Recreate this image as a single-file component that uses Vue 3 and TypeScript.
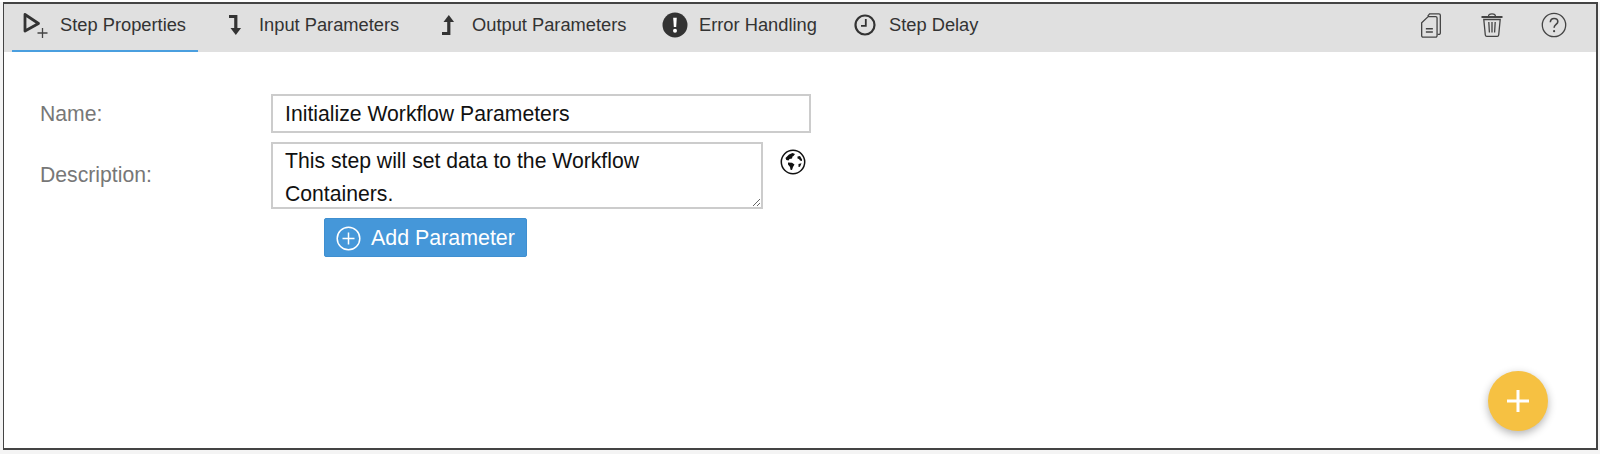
<template>
  <div class="page">
    <div class="panel">
      <div class="toolbar">
        <div class="tabs">
          <a v-for="tab in tabs" :key="tab.label" class="tab" :class="[tab.cls, { active: tab.active }]">
            <svg class="tab-icon" :width="tab.w" height="28" :viewBox="`0 0 ${tab.w} 28`" v-html="tab.icon"></svg>
            <span>{{ tab.label }}</span>
          </a>
        </div>
        <div class="tools">
          <svg width="24" height="28" viewBox="0 0 24 30" fill="none" stroke="#444" stroke-width="1.4">
            <path d="M8.500 5.500 10.500 3h10a1.500 1.500 0 0 1 1.500 1.500v19a1.500 1.500 0 0 1-1.500 1.500H19" />
            <path d="M9 6h8a1.500 1.500 0 0 1 1.500 1.500v19a1.500 1.500 0 0 1-1.500 1.500H3.500A1.500 1.500 0 0 1 2 26.500V12.500z" />
            <path d="M6.500 19h7.500M6.500 22.500h7.500" />
          </svg>
          <svg width="24" height="28" viewBox="0 0 24 28" fill="none" stroke="#444" stroke-width="1.3">
            <path d="M1.500 6h21" stroke-width="2" />
            <path d="M8.500 5.500c0-2 1-2.700 3.500-2.700s3.500.7 3.500 2.700" />
            <path d="M3.800 8.500l1.500 15.500a1.500 1.500 0 0 0 1.500 1.300h10.400a1.500 1.500 0 0 0 1.500-1.300l1.500-15.500z" />
            <path d="M8.800 11l.6 10.500M12 11v10.500M15.200 11l-.6 10.500" />
          </svg>
          <svg width="26" height="28" viewBox="0 0 26 28" fill="none" stroke="#444" stroke-width="1.3">
            <circle cx="13" cy="14" r="11.700" />
            <path d="M9.300 11.200c.2-2.400 1.700-3.700 3.800-3.700 2.200 0 3.700 1.300 3.700 3.200 0 2.700-3.700 2.800-3.700 6" stroke-width="1.600" />
            <circle cx="13.100" cy="20.200" r="1.100" fill="#444" stroke="none" />
          </svg>
        </div>
      </div>

      <form class="form" @submit.prevent>
        <div class="row row-name">
          <label class="label">Name:</label>
          <input class="name-input" type="text" value="Initialize Workflow Parameters" />
        </div>
        <div class="row row-desc">
          <label class="label">Description:</label>
          <textarea class="desc-input">This step will set data to the Workflow Containers.</textarea>
          <svg class="globe" width="26" height="26" viewBox="0 0 26 26">
            <circle cx="13" cy="13" r="11.700" fill="none" stroke="#111" stroke-width="1.500" />
            <path d="M5.500 9 9 5.500l3.500-1.500 2.500 1-1.500 2-1 .5-.5 2-2.500.5-1 1.500-2.200-.5z" fill="#111" />
            <path d="M8 13.500l4 .2 2.500 1.800-1.500 2.500-1 3-1.500-.2-.5-2.800-2-2.500z" fill="#111" />
            <path d="M17.500 7.500l2.500-.5 2 3.500v1.500l-2-.5-1-1.500-1.500-.5zM18.500 15l3-.8-1.500 3.500-1.500.2z" fill="#111" />
          </svg>
        </div>
        <button class="add-btn" type="button">
          <svg width="25" height="25" viewBox="0 0 25 25" fill="none" stroke="#fff" stroke-width="1.500">
            <circle cx="12.500" cy="12.500" r="11.300" />
            <path d="M12.500 6.500v12M6.500 12.500h12" />
          </svg>
          <span>Add Parameter</span>
        </button>
      </form>

      <button class="fab" type="button" aria-label="Add">
        <svg width="22" height="22" viewBox="0 0 22 22"><path d="M11 0v22M0 11h22" stroke="#fff" stroke-width="3" /></svg>
      </button>
    </div>
  </div>
</template>

<script setup lang="ts">
interface Tab {
  label: string;
  cls: string;
  w: number;
  icon: string;
  active?: boolean;
}

const tabs: Tab[] = [
  {
    label: 'Step Properties',
    cls: 'tab-step',
    w: 26,
    active: true,
    icon:
      '<path d="M2 3.500 15.500 12.500 2 20z" fill="none" stroke="#333" stroke-width="2.800" stroke-linejoin="round"/><path d="M19.500 17v10M14.500 22h10" stroke="#444" stroke-width="1.300"/>',
  },
  {
    label: 'Input Parameters',
    cls: 'tab-input',
    w: 16,
    icon: '<path d="M2 5.500h6.800V18" fill="none" stroke="#333" stroke-width="3.200"/><path d="M3.500 17h10.600l-5.300 7z" fill="#333"/>',
  },
  {
    label: 'Output Parameters',
    cls: 'tab-output',
    w: 16,
    icon: '<path d="M2 22.500h6.800V10" fill="none" stroke="#333" stroke-width="3.200"/><path d="M3.500 11h10.600L8.800 4z" fill="#333"/>',
  },
  {
    label: 'Error Handling',
    cls: 'tab-error',
    w: 26,
    icon: '<circle cx="13" cy="14" r="12.500" fill="#333"/><path d="M11.200 6.800h3.600l-.6 9.200h-2.400z" fill="#fff"/><circle cx="13" cy="19.700" r="2" fill="#fff"/>',
  },
  {
    label: 'Step Delay',
    cls: 'tab-delay',
    w: 22,
    icon: '<circle cx="11" cy="14" r="9.500" fill="none" stroke="#333" stroke-width="2.200"/><path d="M11.800 8v6.800H7" fill="none" stroke="#333" stroke-width="1.800"/>',
  },
];
</script>

<style>
html,
body {
  margin: 0;
  background: #f4f4f4;
}
</style>

<style scoped>
.page {
  box-sizing: border-box;
  width: 1600px;
  height: 454px;
  padding: 2px 2px 4px 3px;
  background: linear-gradient(#fff 0 2px, #f4f4f4 2px);
  font-family: 'Liberation Sans', Arial, sans-serif;
}

.panel {
  position: relative;
  box-sizing: border-box;
  height: 100%;
  border: 2px solid #444;
  border-left-width: 1px;
  background: #fff;
}

.toolbar {
  display: flex;
  justify-content: space-between;
  height: 48px;
  background: #e0e0e0;
}

.tabs {
  display: flex;
  padding-left: 8px;
}

.tab {
  box-sizing: border-box;
  display: flex;
  align-items: center;
  height: 48px;
  padding-bottom: 6px;
  font-size: 18.3px;
  color: #333;
  white-space: nowrap;
}

.tab.active {
  border-bottom: 2px solid #4a9fdf;
  padding-bottom: 4px;
}

.tab-step {
  width: 186px;
  padding-left: 11px;
}

.tab-step .tab-icon {
  margin-right: 11px;
}

.tab-input {
  margin-left: 29px;
  width: 213px;
}

.tab-input .tab-icon {
  margin-right: 16px;
}

.tab-output {
  width: 222px;
}

.tab-output .tab-icon {
  margin-right: 16px;
}

.tab-error {
  width: 192px;
}

.tab-error .tab-icon {
  margin-right: 11px;
}

.tab-delay .tab-icon {
  margin-right: 13px;
}

.tools {
  display: flex;
  align-items: center;
  gap: 37px;
  padding: 0 29px 6px 0;
}

.form {
  display: flex;
  flex-direction: column;
  padding: 42px 0 0 36px;
}

.row {
  display: flex;
}

.row-name {
  align-items: center;
}

.row-desc {
  margin-top: 9px;
  align-items: flex-start;
}

.label {
  width: 231px;
  font-size: 21.2px;
  color: #777;
}

.row-desc .label {
  margin-top: 21px;
}

.name-input,
.desc-input {
  box-sizing: border-box;
  margin: 0;
  border: 2px solid #ccc;
  border-radius: 0;
  outline: none;
  padding: 0 12px;
  font-family: inherit;
  font-size: 21.2px;
  color: #111;
  background: #fff;
}

.name-input {
  width: 540px;
  height: 39px;
}

.desc-input {
  display: block;
  width: 492px;
  height: 67px;
  padding: 0 30px 0 12px;
  line-height: 33px;
  overflow: hidden;
}

.globe {
  margin: 7px 0 0 17px;
}

.add-btn {
  box-sizing: border-box;
  display: flex;
  align-items: center;
  gap: 10px;
  width: 203px;
  height: 39px;
  margin: 9px 0 0 284px;
  padding: 1px 0 0 11px;
  border: 1px solid #3f8fd0;
  border-radius: 2px;
  background: #4597d9;
  font-family: inherit;
  font-size: 21.4px;
  color: #fff;
}

.fab {
  position: absolute;
  right: 48px;
  bottom: 17px;
  display: flex;
  align-items: center;
  justify-content: center;
  width: 60px;
  height: 60px;
  padding: 0;
  border: 0;
  border-radius: 50%;
  background: #f6c142;
  box-shadow: 0 3px 8px rgba(0, 0, 0, 0.3);
}
</style>
